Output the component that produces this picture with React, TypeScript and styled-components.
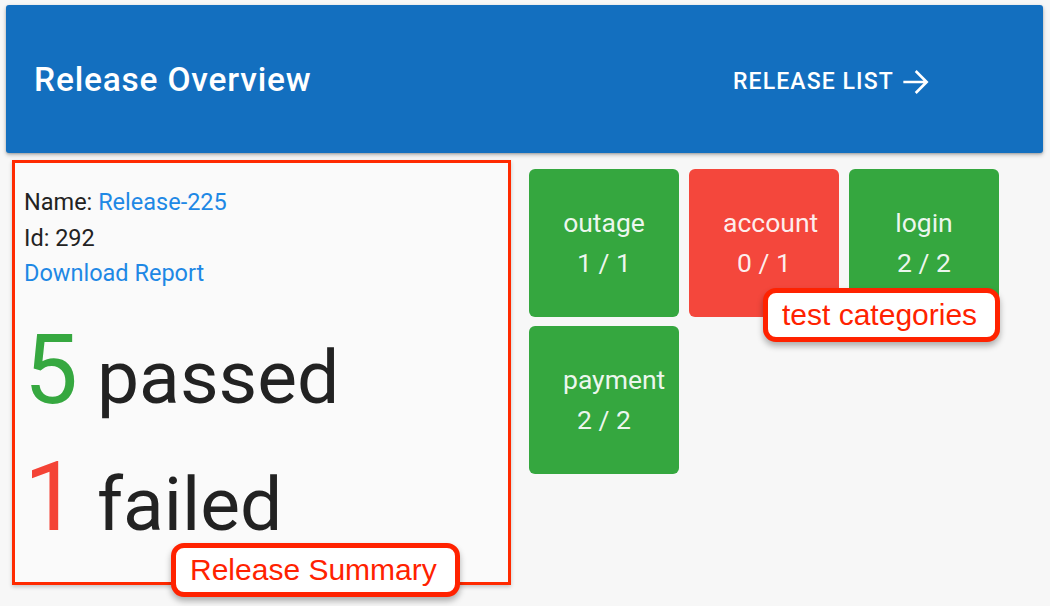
import React from "react";
import styled, { createGlobalStyle } from "styled-components";

const GlobalStyle = createGlobalStyle`
  html, body { margin: 0; padding: 0; }
  body {
    background: #f7f7f7;
    font-family: Roboto, "Noto Sans", "Liberation Sans", sans-serif;
    width: 1050px;
    height: 606px;
    overflow: hidden;
  }
`;

const Page = styled.div`
  padding: 5px 7px 0 6px;
  display: flex;
  flex-direction: column;
  gap: 7px;
`;

const Header = styled.header`
  height: 148px;
  background: #136fbf;
  border-radius: 3px;
  box-shadow: 0 2px 4px rgba(0, 0, 0, 0.25), 0 1px 2px rgba(0, 0, 0, 0.15);
  display: grid;
  grid-template-columns: 1fr 310px;
  align-items: center;
  padding-left: 28px;
`;

const Title = styled.h1`
  margin: 0;
  color: #fff;
  font-size: 33.5px;
  font-weight: 500;
  letter-spacing: 0.8px;
`;

const NavButton = styled.a`
  display: flex;
  align-items: center;
  gap: 6px;
  padding-top: 5px;
  color: #fff;
  font-size: 23px;
  font-weight: 500;
  letter-spacing: 1.1px;
  text-transform: uppercase;
  text-decoration: none;
  cursor: pointer;
`;

const Main = styled.main`
  display: flex;
  align-items: flex-start;
  gap: 18px;
  padding-left: 6px;
`;

const SummaryCard = styled.section`
  position: relative;
  box-sizing: border-box;
  width: 499px;
  height: 425px;
  border: 3px solid #ff2a00;
  background: #fafafa;
  box-shadow: 0 2px 4px rgba(0, 0, 0, 0.2);
  padding: 22px 9px 0;
`;

const InfoLine = styled.div`
  font-size: 23.5px;
  line-height: 35.5px;
  color: #222;
`;

const Link = styled.a`
  color: #1e88e5;
  text-decoration: none;
`;

const Stats = styled.div`
  margin-top: 22px;
  display: flex;
  flex-direction: column;
`;

const StatRow = styled.div`
  display: flex;
  align-items: baseline;
  height: 127px;
`;

const StatNumber = styled.span<{ $color: string }>`
  color: ${(p) => p.$color};
  font-size: 96px;
  font-weight: 400;
  line-height: 112px;
  width: 73px;
`;

const StatLabel = styled.span`
  color: #222;
  font-size: 75px;
  font-weight: 400;
  line-height: 112px;
`;

const Tiles = styled.div`
  position: relative;
  margin-top: 9px;
  display: flex;
  flex-wrap: wrap;
  gap: 9px 10px;
  width: 475px;
`;

const Tile = styled.div<{ $ok: boolean }>`
  box-sizing: border-box;
  width: 150px;
  height: 148px;
  border-radius: 6px;
  background: ${(p) => (p.$ok ? "#35a73f" : "#f4473c")};
  color: rgba(255, 255, 255, 0.92);
  display: flex;
  flex-direction: column;
  justify-content: center;
  padding: 0 34px;
  text-align: center;
  font-size: 26.5px;
  line-height: 40px;
`;

const Callout = styled.div<{ $left: number; $top: number }>`
  position: absolute;
  left: ${(p) => p.$left}px;
  top: ${(p) => p.$top}px;
  box-sizing: border-box;
  border: 5px solid #ff2200;
  border-radius: 13px;
  background: #fff;
  color: #ff2200;
  font-family: "Liberation Sans", Arial, sans-serif;
  font-size: 30px;
  line-height: 44px;
  padding: 0 18px 0 14px;
  white-space: nowrap;
  box-shadow: 0 4px 6px rgba(0, 0, 0, 0.3);
  z-index: 2;
`;

const Arrow = () => (
  <svg width="32" height="32" viewBox="0 0 24 24" fill="none" stroke="#fff" strokeWidth="2" strokeLinecap="square">
    <path d="M3.5 12h16M12.5 4.5l7.5 7.5-7.5 7.5" />
  </svg>
);

const categories = [
  { name: "outage", passed: 1, total: 1 },
  { name: "account", passed: 0, total: 1 },
  { name: "login", passed: 2, total: 2 },
  { name: "payment", passed: 2, total: 2 },
];

export default function App() {
  return (
    <>
      <GlobalStyle />
      <Page>
        <Header>
          <Title>Release Overview</Title>
          <NavButton>
            Release List <Arrow />
          </NavButton>
        </Header>
        <Main>
          <SummaryCard>
            <InfoLine>
              Name: <Link>Release-225</Link>
            </InfoLine>
            <InfoLine>Id: 292</InfoLine>
            <InfoLine>
              <Link>Download Report</Link>
            </InfoLine>
            <Stats>
              <StatRow>
                <StatNumber $color="#36a840">5</StatNumber>
                <StatLabel>passed</StatLabel>
              </StatRow>
              <StatRow>
                <StatNumber $color="#f44336">1</StatNumber>
                <StatLabel>failed</StatLabel>
              </StatRow>
            </Stats>
            <Callout $left={156} $top={380}>Release Summary</Callout>
          </SummaryCard>
          <Tiles>
            {categories.map((c) => (
              <Tile key={c.name} $ok={c.passed === c.total}>
                <div>{c.name}</div>
                <div>
                  {c.passed} / {c.total}
                </div>
              </Tile>
            ))}
            <Callout $left={234} $top={119}>test categories</Callout>
          </Tiles>
        </Main>
      </Page>
    </>
  );
}
